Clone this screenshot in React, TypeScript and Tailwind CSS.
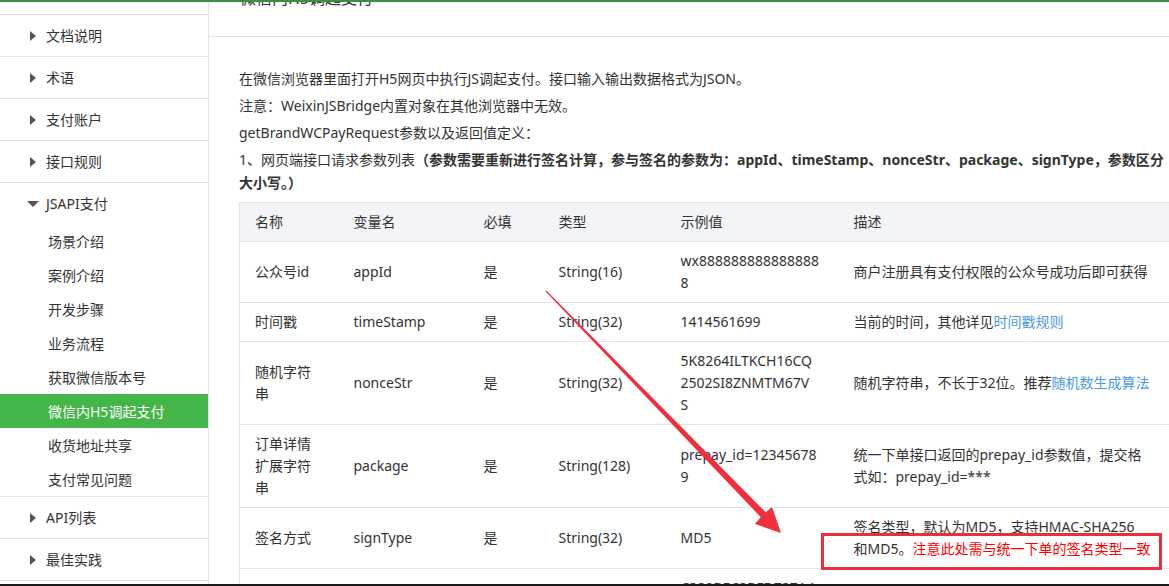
import type { ReactNode } from "react"

const font = "font-['Noto_Sans','Noto_Sans_CJK_SC',sans-serif]"

function RightTriangle() {
  return (
    <svg width="6" height="10" viewBox="0 0 6 10">
      <path d="M0 0 L6 5 L0 10 Z" fill="#555" />
    </svg>
  )
}

function DownTriangle() {
  return (
    <svg width="12" height="6" viewBox="0 0 12 6">
      <path d="M0 0 L12 0 L6 6 Z" fill="#555" />
    </svg>
  )
}

function TopItem({ label, open = false }: { label: string; open?: boolean }) {
  return (
    <div className="h-[42px] border-t border-[#e4e4e4] flex items-center pl-[27px]">
      <span className="w-[12px] flex justify-center">{open ? <DownTriangle /> : <RightTriangle />}</span>
      <span className="ml-[7px] text-[14px] text-[#333]">{label}</span>
    </div>
  )
}

const subItems = ["场景介绍", "案例介绍", "开发步骤", "业务流程", "获取微信版本号", "微信内H5调起支付", "收货地址共享", "支付常见问题"]

function Sidebar() {
  return (
    <aside className="w-[209px] shrink-0 border-r border-[#e4e4e4] overflow-hidden">
      <div className="h-[12px]" />
      <TopItem label="文档说明" />
      <TopItem label="术语" />
      <TopItem label="支付账户" />
      <TopItem label="接口规则" />
      <TopItem label="JSAPI支付" open />
      {subItems.map((item) => (
        <div
          key={item}
          className={
            item === "微信内H5调起支付"
              ? "h-[34px] flex items-center pl-[48px] text-[14px] text-white bg-[#44b549]"
              : "h-[34px] flex items-center pl-[48px] text-[14px] text-[#333]"
          }
        >
          {item}
        </div>
      ))}
      <TopItem label="API列表" />
      <TopItem label="最佳实践" />
      <div className="h-[42px] border-t border-[#e4e4e4]" />
    </aside>
  )
}

function Link({ children }: { children: ReactNode }) {
  return <span className="text-[#4a9ae8]">{children}</span>
}

const rows: { name: ReactNode; key: string; type: string; example: ReactNode; desc: ReactNode }[] = [
  {
    name: "公众号id",
    key: "appId",
    type: "String(16)",
    example: (
      <>
        wx888888888888888
        <br />8
      </>
    ),
    desc: "商户注册具有支付权限的公众号成功后即可获得",
  },
  {
    name: "时间戳",
    key: "timeStamp",
    type: "String(32)",
    example: "1414561699",
    desc: (
      <>
        当前的时间，其他详见<Link>时间戳规则</Link>
      </>
    ),
  },
  {
    name: (
      <>
        随机字符
        <br />串
      </>
    ),
    key: "nonceStr",
    type: "String(32)",
    example: (
      <>
        5K8264ILTKCH16CQ
        <br />
        2502SI8ZNMTM67V
        <br />S
      </>
    ),
    desc: (
      <>
        随机字符串，不长于32位。推荐<Link>随机数生成算法</Link>
      </>
    ),
  },
  {
    name: (
      <>
        订单详情
        <br />
        扩展字符
        <br />串
      </>
    ),
    key: "package",
    type: "String(128)",
    example: (
      <>
        prepay_id=12345678
        <br />9
      </>
    ),
    desc: (
      <>
        统一下单接口返回的prepay_id参数值，提交格
        <br />
        式如：prepay_id=***
      </>
    ),
  },
  {
    name: "签名方式",
    key: "signType",
    type: "String(32)",
    example: "MD5",
    desc: (
      <>
        签名类型，默认为MD5，支持HMAC-SHA256
        <br />
        和MD5。<span className="text-[#ff0000]">注意此处需与统一下单的签名类型一致</span>
      </>
    ),
  },
  {
    name: "签名",
    key: "paySign",
    type: "String(64)",
    example: (
      <>
        C380BEC2BFD727A4
        <br />
        B6845133519F3AD6
      </>
    ),
    desc: (
      <>
        签名，详见<Link>签名生成算法</Link>
      </>
    ),
  },
]

const cell = "px-[15px] py-2 leading-[22px] align-middle text-left font-normal whitespace-nowrap border-b border-[#e4e4e4]"

function ParamTable() {
  return (
    <table className="mt-[8px] w-full table-fixed border-collapse border-t border-l border-[#e4e4e4] text-[14px] text-[#333]">
      <colgroup>
        <col className="w-[99px]" />
        <col className="w-[130px]" />
        <col className="w-[75px]" />
        <col className="w-[122px]" />
        <col className="w-[173px]" />
        <col />
      </colgroup>
      <thead>
        <tr className="bg-[#f3f4f7]">
          {["名称", "变量名", "必填", "类型", "示例值", "描述"].map((h) => (
            <th key={h} className={cell}>
              {h}
            </th>
          ))}
        </tr>
      </thead>
      <tbody>
        {rows.map((r) => (
          <tr key={r.key}>
            <td className={cell}>{r.name}</td>
            <td className={cell}>{r.key}</td>
            <td className={cell}>是</td>
            <td className={cell}>{r.type}</td>
            <td className={cell}>{r.example}</td>
            <td className={cell}>{r.desc}</td>
          </tr>
        ))}
      </tbody>
    </table>
  )
}

function Annotation() {
  return (
    <>
      <svg className="absolute inset-0 pointer-events-none" width="1169" height="586" viewBox="0 0 1169 586">
        <polygon points="545.6,291.4 546.4,290.6 766.1,512.7 761.1,517.5" fill="#ef2f3b" />
        <polygon points="781,533 755,524 760,518 765,513 772,507" fill="#ef2f3b" />
      </svg>
      <div className="absolute left-[821px] top-[533px] w-[341px] h-[37px] border-[3px] border-[#ea2e3a] pointer-events-none" />
    </>
  )
}

export default function App() {
  return (
    <div className={`relative w-[1169px] h-[586px] overflow-hidden flex flex-col bg-white ${font}`}>
      <div className="h-[2px] bg-[#3e8e41] shrink-0" />

      <div className="flex h-[582px] overflow-hidden">
        <Sidebar />

        <main className="flex-1 overflow-hidden">
          {/* page title, scrolled mostly out of view */}
          <div className="-mt-[16px] h-[51px] border-b border-[#e4e4e4] pl-[31px] text-[16px] leading-[24px] text-[#333]">
            微信内H5调起支付
          </div>

          <div className="pl-[30px] pt-[30px] text-[14px] text-[#333]">
            <p className="leading-[23px] mb-1 whitespace-nowrap">
              在微信浏览器里面打开H5网页中执行JS调起支付。接口输入输出数据格式为JSON。
            </p>
            <p className="leading-[23px] mb-1 whitespace-nowrap">注意：WeixinJSBridge内置对象在其他浏览器中无效。</p>
            <p className="leading-[23px] mb-1 whitespace-nowrap">getBrandWCPayRequest参数以及返回值定义：</p>
            <p className="leading-[23px] mb-1 whitespace-nowrap">
              1、网页端接口请求参数列表
              <span className="font-bold">
                （参数需要重新进行签名计算，参与签名的参数为：appId、timeStamp、nonceStr、package、signType，参数区分
                <br />
                大小写。）
              </span>
            </p>
            <ParamTable />
          </div>
        </main>
      </div>

      <div className="h-[2px] bg-[#1a1a1a] shrink-0" />

      <Annotation />
    </div>
  )
}
